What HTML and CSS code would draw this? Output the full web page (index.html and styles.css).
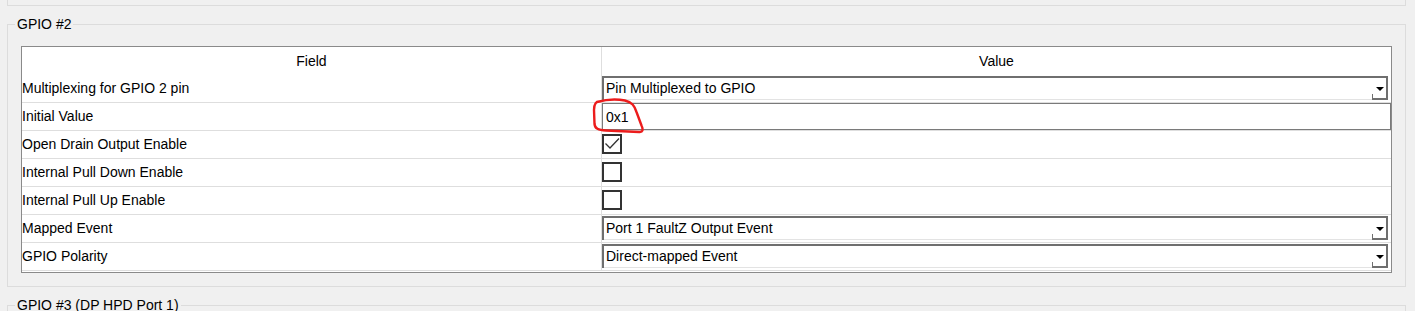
FILE: index.html
```html
<!DOCTYPE html>
<html>
<head>
<meta charset="utf-8">
<link rel="stylesheet" href="styles.css">
</head>
<body>
<div class="stub"></div>
<fieldset class="group">
  <legend>GPIO #2</legend>
  <div class="grid">
    <div class="hd fcol">Field</div>
    <div class="hd">Value</div>

    <div class="cell fcol">Multiplexing for GPIO 2 pin</div>
    <div class="cell"><div class="combo"><span class="combo-text">Pin Multiplexed to GPIO</span><span class="combo-btn"></span></div></div>

    <div class="cell fcol">Initial Value</div>
    <div class="cell"><div class="text-input">0x1</div></div>

    <div class="cell fcol">Open Drain Output Enable</div>
    <div class="cell"><span class="check"><svg width="16" height="16" viewBox="0 0 16 16"><path d="M1.5 7.5 L6 12 L15 2.5" fill="none" stroke="#333" stroke-width="1.3"/></svg></span></div>

    <div class="cell fcol">Internal Pull Down Enable</div>
    <div class="cell"><span class="check"></span></div>

    <div class="cell fcol">Internal Pull Up Enable</div>
    <div class="cell"><span class="check"></span></div>

    <div class="cell fcol">Mapped Event</div>
    <div class="cell"><div class="combo"><span class="combo-text">Port 1 FaultZ Output Event</span><span class="combo-btn"></span></div></div>

    <div class="cell fcol">GPIO Polarity</div>
    <div class="cell"><div class="combo"><span class="combo-text">Direct-mapped Event</span><span class="combo-btn"></span></div></div>
  </div>
</fieldset>
<fieldset class="group">
  <legend>GPIO #3 (DP HPD Port 1)</legend>
  <div class="spacer"></div>
</fieldset>
<svg class="annot" width="1415" height="311" viewBox="0 0 1415 311">
  <path d="M600 101.5 C596 101, 594 104, 594 110 L594.5 124 C595 128.5, 598 130, 606 130.5 L639 132 C643 132.5, 643.5 129.5, 641.5 125.5 L636.5 112 C634.5 106, 632 102, 625 100.5 C617 99, 606 99.5, 597 102" fill="none" stroke="#ec1c1c" stroke-width="2.4" stroke-linecap="round" stroke-linejoin="round"/>
</svg>
</body>
</html>
```
FILE: styles.css
```css
html, body {
  margin: 0;
  padding: 0;
}
body {
  background: #f0f0f0;
  font-family: "Liberation Sans", Arial, sans-serif;
  font-size: 14px;
  color: #000;
  height: 311px;
  overflow: hidden;
  position: relative;
}
.stub {
  height: 5px;
  margin: 0 9px 0 7px;
  border: 1px solid #dcdcdc;
  border-top: none;
}
.group {
  margin: 10px 9px 0 7px;
  padding: 14px 13px 13px 7px;
  border: 1px solid #dcdcdc;
  min-width: 0;
}
.group legend {
  padding: 0 2px;
  font-size: 14px;
  line-height: 16px;
}
.grid {
  margin-left: 6px;
  display: grid;
  grid-template-columns: 580px 789px;
  border: 1px solid #8a8a8a;
  padding-bottom: 1px;
  background: #fff;
}
.hd {
  height: 28px;
  display: flex;
  align-items: center;
  justify-content: center;
  box-sizing: border-box;
}
.cell {
  height: 28px;
  box-sizing: border-box;
  border-bottom: 1px solid #dedede;
  padding-bottom: 1px;
  display: flex;
  align-items: center;
}
.fcol {
  border-right: 1px solid #dedede;
}
.combo {
  align-self: flex-start;
  margin-top: 1px;
  margin-right: 3px;
  flex: 1;
  height: 24px;
  box-sizing: border-box;
  display: flex;
  background: #fff;
  border-top: 2px solid #6f6f6f;
  border-left: 2px solid #6f6f6f;
}
.combo-text {
  flex: 1;
  display: flex;
  align-items: center;
  padding-left: 2px;
  padding-bottom: 1px;
  border-bottom: 1px solid #e3e3e3;
}
.combo-btn {
  width: 16px;
  box-sizing: border-box;
  border-right: 2px solid #6f6f6f;
  border-bottom: 2px solid #6f6f6f;
  position: relative;
}
.combo-btn::after {
  content: "";
  position: absolute;
  left: 4px;
  top: 9px;
  border-left: 4px solid transparent;
  border-right: 4px solid transparent;
  border-top: 4px solid #000;
}
.combo-btn::before {
  content: "";
  position: absolute;
  left: 0;
  bottom: 0;
  width: 1px;
  height: 4px;
  background: #6f6f6f;
}
.text-input {
  flex: 1;
  align-self: stretch;
  box-sizing: border-box;
  border: 1px solid #7a7a7a;
  display: flex;
  align-items: center;
  padding-left: 3px;
  margin-bottom: -1px;
}
.check {
  width: 20px;
  height: 20px;
  box-sizing: border-box;
  border: 2px solid #333;
  background: #fff;
  display: flex;
  align-items: center;
  justify-content: center;
}
.check svg {
  display: block;
}
.spacer {
  height: 40px;
}
.annot {
  position: absolute;
  left: 0;
  top: 0;
  pointer-events: none;
}
```
